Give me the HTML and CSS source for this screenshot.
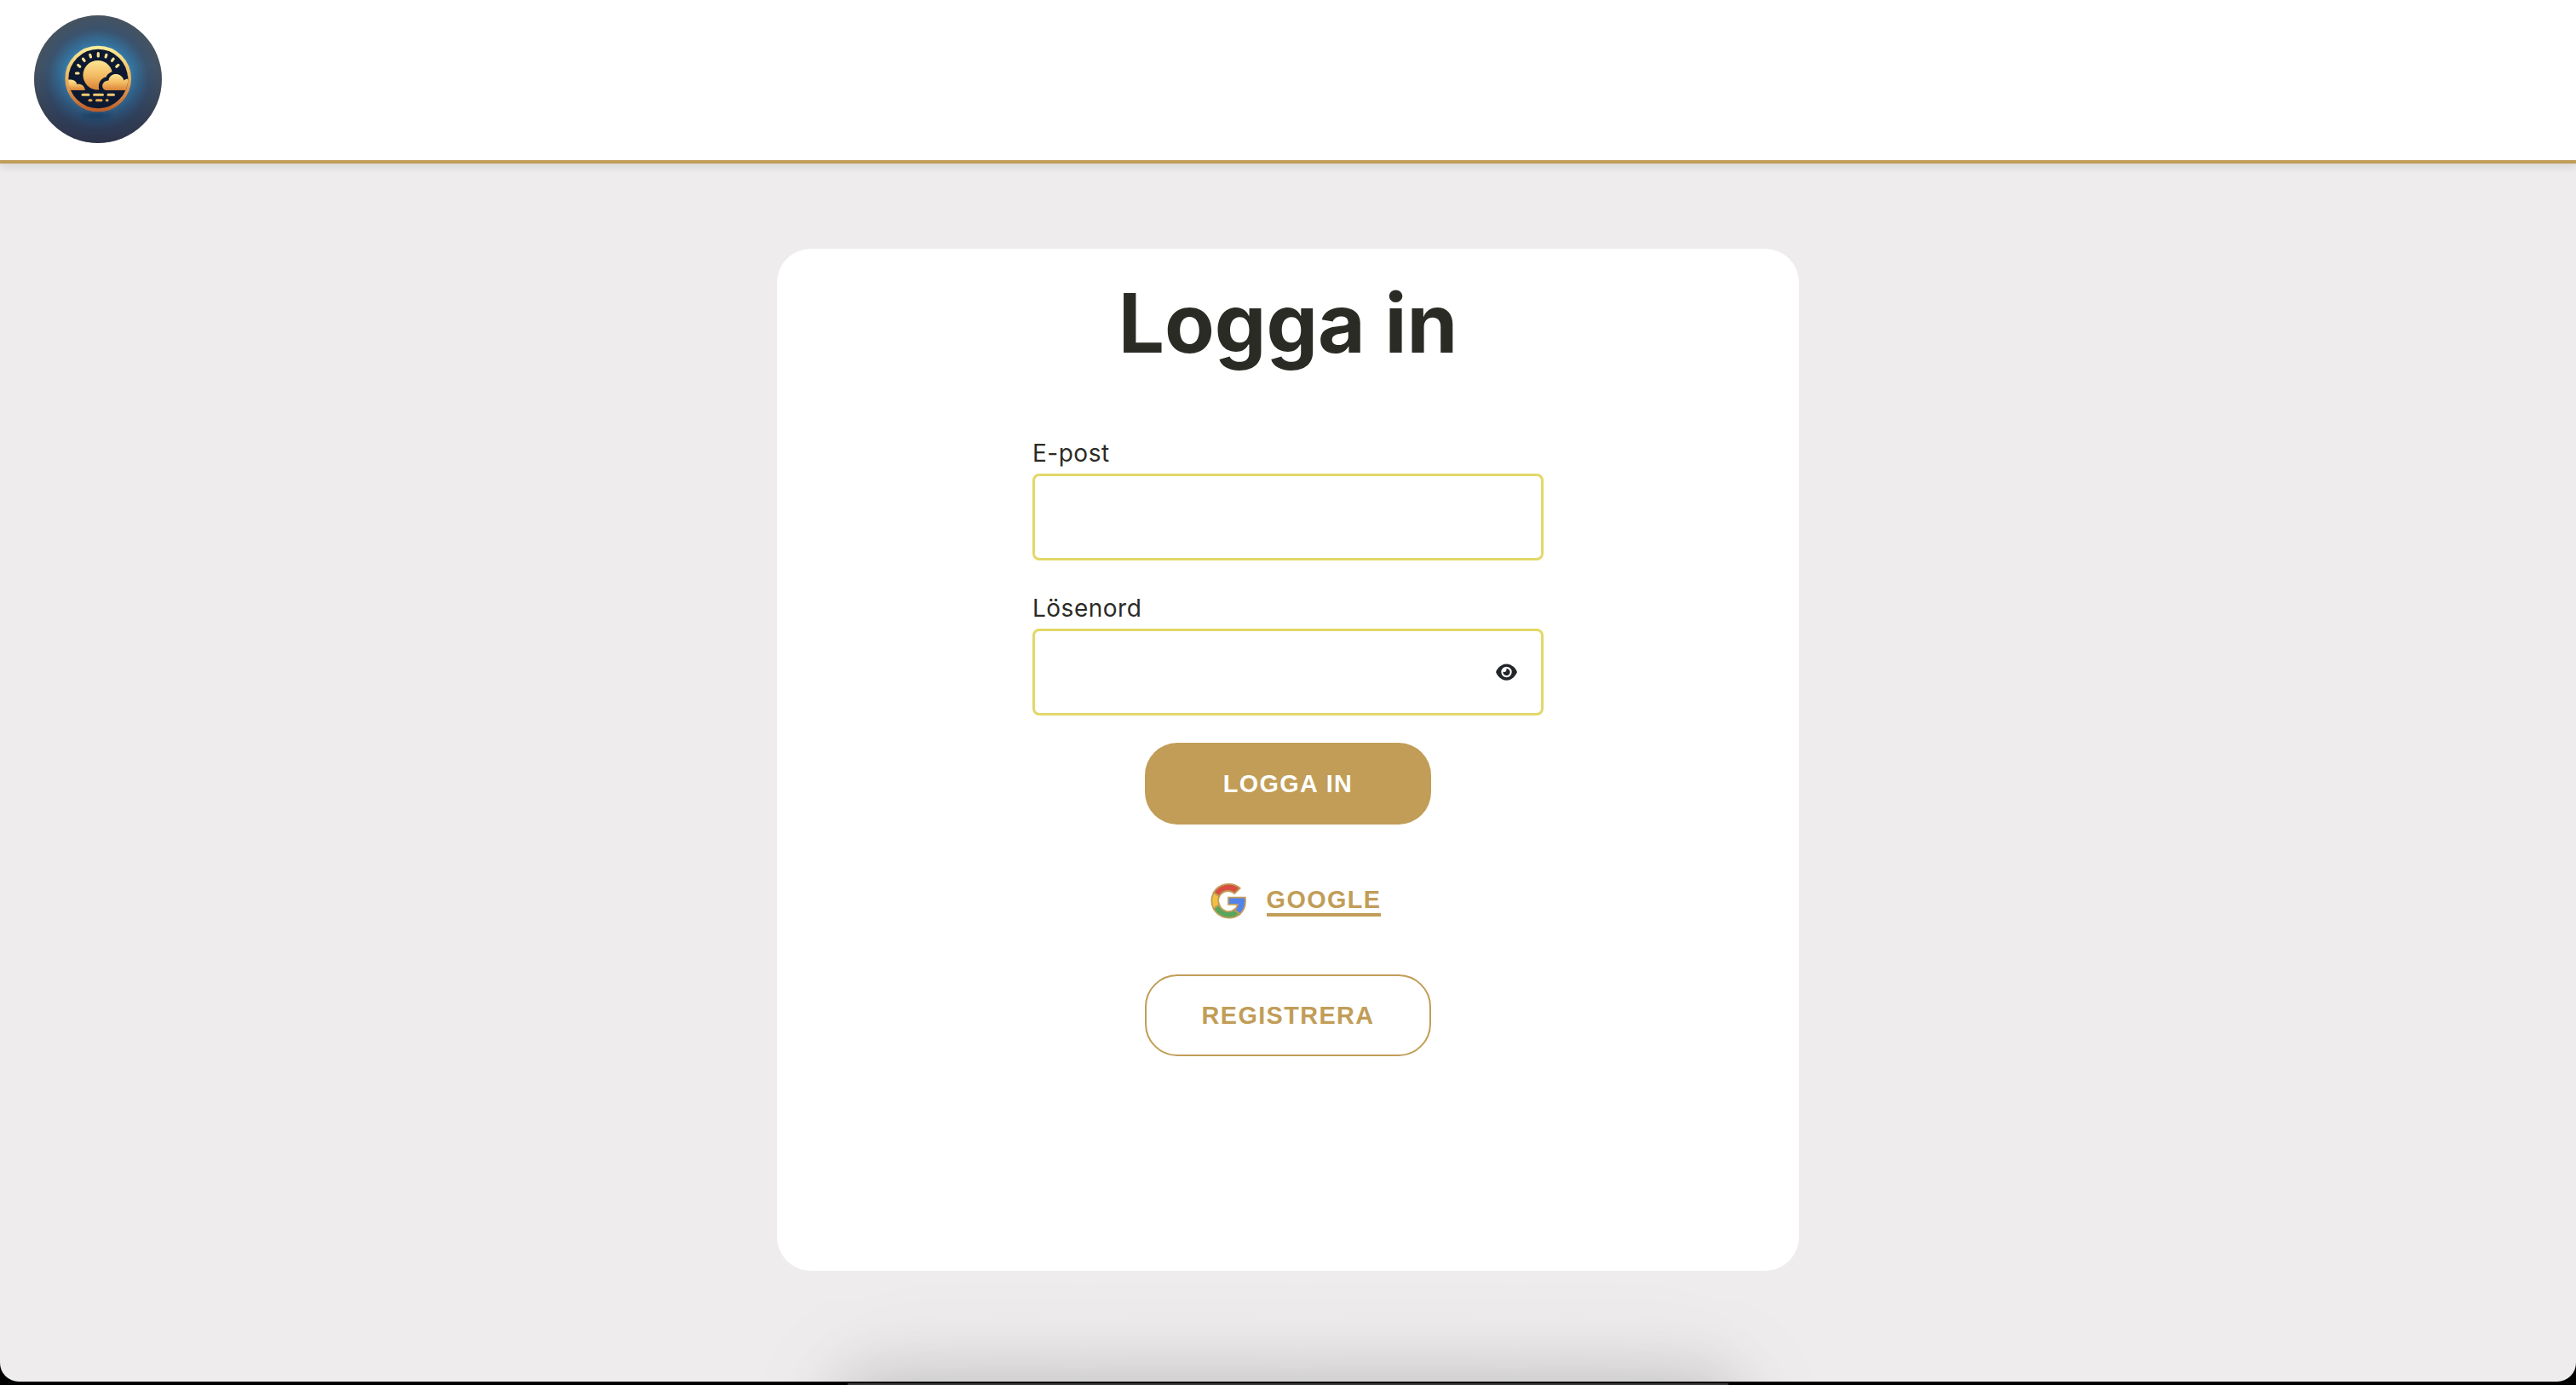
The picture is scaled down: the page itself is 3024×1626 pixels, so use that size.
FILE: index.html
```html
<!DOCTYPE html>
<html lang="sv">
<head>
<meta charset="utf-8">
<title>Logga in</title>
<link rel="stylesheet" href="styles.css">
</head>
<body>
<div class="window">
  <header class="header">
    <svg class="logo" viewBox="0 0 150 150" aria-hidden="true">
      <defs>
        <radialGradient id="sky" cx="75" cy="76" r="76" gradientUnits="userSpaceOnUse">
          <stop offset=".4" stop-color="#3f92c4"/>
          <stop offset=".58" stop-color="#34709b"/>
          <stop offset=".78" stop-color="#3a536e"/>
          <stop offset="1" stop-color="#46525f"/>
        </radialGradient>
        <linearGradient id="dusk" x1="0" y1="0" x2="0" y2="1">
          <stop offset=".4" stop-color="#1f2847" stop-opacity="0"/>
          <stop offset="1" stop-color="#23263f" stop-opacity=".7"/>
        </linearGradient>
        <linearGradient id="ring" x1="0" y1="36" x2="0" y2="113" gradientUnits="userSpaceOnUse">
          <stop offset="0" stop-color="#fbee9b"/>
          <stop offset=".5" stop-color="#eeb25c"/>
          <stop offset="1" stop-color="#bd5b28"/>
        </linearGradient>
        <linearGradient id="sun" x1="0" y1="0" x2="0" y2="1">
          <stop offset="0" stop-color="#fde694"/>
          <stop offset=".55" stop-color="#f2b860"/>
          <stop offset="1" stop-color="#d98236"/>
        </linearGradient>
        <clipPath id="disc"><circle cx="75.200" cy="74.500" r="35.200"/></clipPath>
        <filter id="soft" x="-50%" y="-100%" width="200%" height="300%"><feGaussianBlur stdDeviation="3"/></filter>
      </defs>
      <circle cx="75" cy="75" r="75" fill="url(#sky)"/>
      <circle cx="75" cy="75" r="75" fill="url(#dusk)"/>
      <ellipse cx="73" cy="118" rx="17" ry="3" fill="#183a5e" filter="url(#soft)"/>
      <circle cx="75.200" cy="74.500" r="36.800" fill="#0d1930" stroke="url(#ring)" stroke-width="4"/>
      <circle cx="74.800" cy="70.200" r="17.300" fill="url(#sun)"/>
      <g stroke="#fae08e" stroke-width="3.200" stroke-linecap="round">
        <path d="M75.300 44.600v3.400M65.700 46.300l.8 2.600M84.900 46.300l-.8 2.600M57.500 51.100l1.600 2.300M93.100 51.100l-1.600 2.300M51.700 58.400l2.100 1.800M98.900 58.400l-2.100 1.800M49.500 68h2.500"/>
      </g>
      <path d="M76.500 88c-2-7 1-14 8-15.500 4-8 14-8 20-4l11 5v14.500Z" fill="#0d1930" clip-path="url(#disc)"/>
      <g clip-path="url(#disc)">
        <path d="M35 88V78c5-4 14-3 15.500 3 4-1 8.500 1 9.500 7Z" fill="url(#sun)"/>
        <path d="M84 88c-6-2-5-11 3.500-11.500 1-10 15.500-10 18 0 2-2 4-2 8-1v12.500Z" fill="url(#sun)"/>
      </g>
      <g stroke="#f5c974" stroke-width="3" stroke-linecap="round">
        <path d="M57 93.300h7M70.500 93.300h10M87 93.300h6.500"/>
        <path d="M65 99.700h2M73.500 99.700h5.500M85.300 99.700h.8" stroke="#e8ab4f"/>
      </g>
    </svg>
  </header>
  <main class="main">
    <section class="card">
      <h1 class="title">Logga in</h1>
      <form class="form">
        <label class="label" for="email">E-post</label>
        <input class="input" id="email" type="email">
        <label class="label" for="password">Lösenord</label>
        <div class="password">
          <input class="input" id="password" type="password">
          <svg class="eye" viewBox="0 0 576 512" aria-hidden="true"><path fill="#212529" d="M288 32c-80.800 0-145.500 36.800-192.600 80.600C48.600 156 17.300 208 2.500 243.700c-3.300 7.900-3.300 16.700 0 24.600C17.300 304 48.600 356 95.400 399.400C142.500 443.200 207.200 480 288 480s145.500-36.800 192.600-80.600c46.800-43.500 78.100-95.400 93-131.100c3.300-7.900 3.300-16.700 0-24.600c-14.900-35.700-46.200-87.700-93-131.100C433.500 68.800 368.800 32 288 32zM144 256a144 144 0 1 1 288 0 144 144 0 1 1-288 0zm144-64c0 35.300-28.700 64-64 64c-7.100 0-13.900-1.200-20.300-3.300c-5.500-1.800-11.900 1.600-11.700 7.400c.3 6.900 1.300 13.800 3.200 20.700c13.700 51.200 66.400 81.600 117.600 67.900s81.600-66.400 67.900-117.600c-11.100-41.500-47.800-69.400-88.600-71.100c-5.800-.2-9.200 6.100-7.400 11.700c2.100 6.400 3.300 13.200 3.300 20.300z"/></svg>
        </div>
      </form>
      <div class="actions">
        <button class="button button-primary">Logga in</button>
        <button class="button button-link">
          <svg class="google" viewBox="0 0 42 42" aria-hidden="true">
            <g stroke="#c19d57" stroke-width="1.800">
              <path fill="#d84f40" d="M4.600 11.800A20 20 0 0 1 34.800 6.600L28.500 12.600A11.300 11.300 0 0 0 11 16Z"/>
              <path fill="#f2bf42" d="M4.600 11.800A20 20 0 0 0 4.600 30.200L11 25.500A11.300 11.300 0 0 1 11 16Z"/>
              <path fill="#58a55c" d="M4.600 30.200A20 20 0 0 0 34.500 36.300L28.500 31A11.300 11.300 0 0 1 11 25.500Z"/>
              <path fill="#5383ec" d="M21.500 17.200H40.700C41.800 25 39.500 32 34.500 36.300L28.500 31Q31.500 29 32.200 25.300H21.500Z"/>
            </g>
          </svg>
          <span class="link-text">Google</span>
        </button>
        <button class="button button-outline">Registrera</button>
      </div>
    </section>
  </main>
  <div class="dock-shadow"></div>
</div>
<div class="dock"></div>
</body>
</html>
```
FILE: styles.css
```css
* { box-sizing: border-box; }

body {
  margin: 0;
  height: 1626px;
  overflow: hidden;
  background: #000;
  color: #2b2b25;
  font-family: Inter, sans-serif;
}

.window {
  position: relative;
  height: 1622px;
  overflow: hidden;
  background: #eeeced;
  border-radius: 0 0 22px 22px;
}

.header {
  position: relative;
  height: 192px;
  padding: 18px 40px;
  background: #fff;
  border-bottom: 4px solid #c19d57;
  box-shadow: 0 4px 10px rgba(0, 0, 0, .1);
}

.logo {
  display: block;
  width: 150px;
  height: 150px;
}

.main {
  display: flex;
  justify-content: center;
  padding-top: 100px;
}

.card {
  display: flex;
  flex-direction: column;
  align-items: center;
  width: 1200px;
  height: 1200px;
  padding-top: 29px;
  background: #fff;
  border-radius: 40px;
}

.title {
  margin: 0 0 69px;
  font-size: 96px;
  line-height: 116px;
  font-weight: 700;
}

.form {
  display: flex;
  flex-direction: column;
  width: 600px;
}

.label {
  height: 50px;
  font-size: 28px;
  line-height: 53px;
  letter-spacing: .5px;
}

.input {
  display: block;
  width: 600px;
  height: 102px;
  margin: 0 0 30px;
  padding: 0 24px;
  background: #fff;
  border: 3px solid #e2d867;
  border-radius: 8px;
  outline: none;
  font: inherit;
}

.password { position: relative; }

.eye {
  position: absolute;
  right: 31px;
  top: 40px;
  width: 25px;
  height: 22px;
}

.actions {
  display: flex;
  flex-direction: column;
  align-items: center;
  gap: 40px;
  margin-top: 2px;
}

.button {
  display: flex;
  align-items: center;
  justify-content: center;
  width: 336px;
  height: 96px;
  padding: 0;
  border: 0;
  border-radius: 38px;
  background: none;
  color: #c19d57;
  font: 700 28.800px/36px "Liberation Sans", sans-serif;
  letter-spacing: 1.400px;
  text-transform: uppercase;
}

.button-primary {
  background: #c19d57;
  color: #fff;
}

.button-link {
  gap: 24px;
  padding-left: 17px;
}

.button-outline { border: 2px solid #c19d57; }

.google {
  width: 43px;
  height: 43px;
  margin-top: 3px;
}

.link-text {
  padding-top: 4px;
  border-bottom: 4px solid #c19d57;
  line-height: 32px;
}

.dock-shadow {
  position: absolute;
  left: 995px;
  bottom: -160px;
  width: 1034px;
  height: 160px;
  box-shadow: 0 0 70px 6px rgba(0, 0, 0, .14), 0 0 150px 10px rgba(0, 0, 0, .07);
}

.dock {
  width: 1034px;
  height: 2px;
  margin: 2px auto 0;
  background: #3a3a3a;
}
```
